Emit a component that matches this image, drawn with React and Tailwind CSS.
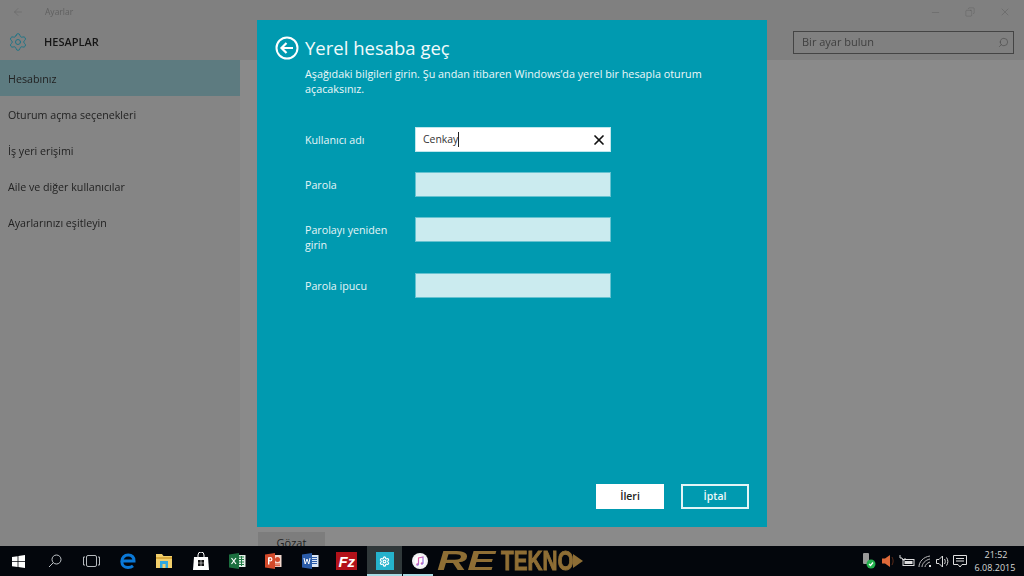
import React from "react";
import { Settings, ArrowLeft, Search, Minus, X, Copy } from "lucide-react";

const navItems = ["Hesabınız", "Oturum açma seçenekleri", "İş yeri erişimi", "Aile ve diğer kullanıcılar", "Ayarlarınızı eşitleyin"];

function Field({ label, value, h = "h-[45px]", labelClass = "" }) {
  return (
    <div className={`flex items-start ${h}`}>
      <div className={`w-[110px] pt-[6px] text-[10.7px] leading-[15px] text-[#e6f5f7] ${labelClass}`}>{label}</div>
      {value ? (
        <div className="flex h-[25px] w-[196px] items-center justify-between border border-[#bfe6ec] bg-white pl-[7px] pr-[3px] text-[10.4px] text-[#333]">
          <span className="flex items-center">{value}<span className="ml-0 inline-block h-[15px] w-px bg-[#222]" /></span>
          <X size={16} strokeWidth={2.6} className="text-[#111]" />
        </div>
      ) : (
        <div className="h-[25px] w-[196px] border border-[#66c2d0] bg-[#cbebef]" />
      )}
    </div>
  );
}

function Tb({ w = "w-[36.5px]", children, className = "" }) {
  return <div className={`flex h-full shrink-0 items-center justify-center ${w} ${className}`}>{children}</div>;
}

export default function App() {
  return (
    <div className="relative flex h-[576px] w-[1024px] flex-col overflow-hidden bg-[#8a8a8a] font-['Open_Sans','Noto_Sans',sans-serif]">
      {/* Settings window */}
      <div className="flex h-[60px] shrink-0 flex-col bg-[#808080]">
        <div className="flex h-[24px] items-center justify-between pl-[12px] pr-[13px] text-[#6a6a6a] blur-[0.4px]">
          <div className="flex items-center">
            <ArrowLeft size={12} strokeWidth={1.2} className="text-[#666]" />
            <span className="ml-[21px] text-[8.5px] text-[#5f5f5f]">Ayarlar</span>
          </div>
          <div className="flex items-center gap-[24px] text-[#5c5c5c]">
            <Minus size={11} strokeWidth={1} />
            <Copy size={10} strokeWidth={1} className="-scale-x-100" />
            <X size={12} strokeWidth={1} />
          </div>
        </div>
        <div className="flex h-[36px] items-center pl-[8px]">
          <Settings size={20} strokeWidth={1.2} className="text-[#1d7486] blur-[0.3px]" />
          <span className="ml-[16px] text-[11px] font-semibold text-[#151515] blur-[0.3px]">HESAPLAR</span>
          <div className="ml-auto mr-[10px] flex h-[23px] w-[221px] items-center justify-between border border-[#444] pl-[8px] pr-[4px] text-[11px] text-[#3f3f3f] blur-[0.3px]">
            <span>Bir ayar bulun</span>
            <Search size={11} strokeWidth={1.2} className="-scale-x-100 text-[#444]" />
          </div>
        </div>
      </div>
      <div className="flex min-h-0 flex-1">
        <div className="w-[240px] shrink-0 bg-[#858585] text-[10.7px] text-[#222]">
          {navItems.map((n, i) => (
            <div key={n} className={`flex h-[36px] items-center pl-[8px] pt-[2px] ${i === 0 ? "bg-[#5d7b80]" : ""}`}><span className="blur-[0.3px]">{n}</span></div>
          ))}
        </div>
        <div className="flex flex-1 flex-col justify-end pl-[18px]">
          <div className="flex h-[14px] w-[67px] items-start justify-center overflow-hidden bg-[#7d7d7d] pt-[4px] text-[11px] leading-[14px] text-[#222]">Gözat</div>
        </div>
      </div>

      {/* Taskbar */}
      <div className="flex h-[30px] shrink-0 items-center bg-[#03060c]">
        <Tb>
          <svg width="13" height="13" viewBox="0 0 13 13" fill="#fff"><path d="M0 2l5.6-.8v5H0zM6.4 1.100L13 0v6.200H6.400zM0 7h5.600v5L0 11.200zM6.400 7H13v6l-6.600-1z" /></svg>
        </Tb>
        <Tb>
          <svg width="14" height="14" viewBox="0 0 14 14" fill="none" stroke="#bfc4c8" strokeWidth="1"><circle cx="8.500" cy="5.500" r="4.500" /><path d="M5.300 8.700L1 13" /></svg>
        </Tb>
        <Tb>
          <svg width="17" height="12" viewBox="0 0 17 12" fill="none" stroke="#b5b9bd" strokeWidth="1"><rect x="3.500" y=".5" width="10" height="11" rx="1.500" /><path d="M2 2H.5v8H2M15 2h1.500v8H15" /></svg>
        </Tb>
        <Tb>
          <svg width="16" height="16" viewBox="0 0 16 16" fill="none" stroke="#0a78d7" strokeWidth="3"><path d="M2 8h12c0-4-2.500-6-5.800-6C4.500 2 1.800 4.800 1.800 8.500c0 3.600 2.700 6 6.200 6 2 0 3.700-.6 5-1.700" /></svg>
        </Tb>
        <Tb>
          <svg width="16" height="14" viewBox="0 0 16 14"><path d="M0 0h6l1.500 2H16v12H0z" fill="#f2cf6c" /><path d="M0 3h16v2H0z" fill="#d9a93e" /><rect x="4" y="7" width="8" height="7" fill="#2fa8e0" /><rect x="6.500" y="10" width="3" height="4" fill="#f2cf6c" /></svg>
        </Tb>
        <Tb>
          <svg width="16" height="18" viewBox="0 0 16 18"><path d="M5 5V3a3 3 0 016 0v2" fill="none" stroke="#fff" strokeWidth="1" /><path d="M1 5h14l1 13H0z" fill="#fff" /><path d="M5 8h2.700v2.700H5zM8.300 8H11v2.700H8.300zM5 11.300h2.700V14H5zM8.300 11.300H11V14H8.300z" fill="#111" /></svg>
        </Tb>
        <Tb>
          <svg width="17" height="16" viewBox="0 0 17 16"><path d="M6 2h10.500v12H6z" fill="#e4efe8" /><path d="M10 4h5M10 6.500h5M10 9h5M10 11.500h5M12.500 3v10" stroke="#1f7a45" strokeWidth="1" /><path d="M0 1.500L10 0v16L0 14.500z" fill="#1b6e3f" /><path d="M2.500 5L7 11M7 5l-4.500 6" stroke="#fff" strokeWidth="1.200" fill="none" /></svg>
        </Tb>
        <Tb>
          <svg width="17" height="16" viewBox="0 0 17 16"><path d="M6 2h10.500v12H6z" fill="#f4d9cf" /><circle cx="12.500" cy="6.500" r="2.500" fill="#d2492a" /><path d="M10 11h5M10 12.700h5" stroke="#d2492a" /><path d="M0 1.500L10 0v16L0 14.500z" fill="#d2492a" /><rect x="3" y="4.500" width="1.400" height="7" fill="#fff" /><circle cx="5.200" cy="6.300" r="1.700" fill="none" stroke="#fff" strokeWidth="1.200" /></svg>
        </Tb>
        <Tb>
          <svg width="17" height="16" viewBox="0 0 17 16"><path d="M6 2h10.500v12H6z" fill="#dbe6f5" /><path d="M10 4.500h5M10 6.500h5M10 8.500h5M10 10.500h5" stroke="#2b5ba8" /><path d="M0 1.500L10 0v16L0 14.500z" fill="#2b5ba8" /><path d="M2 5l1.200 6L5 6l1.800 5L8 5" stroke="#fff" strokeWidth="1" fill="none" /></svg>
        </Tb>
        <Tb>
          <div className="flex h-[18px] w-[21px] items-center justify-center bg-[#b3121a] font-['Liberation_Sans'] text-[15px] font-bold italic leading-none text-white">Fz</div>
        </Tb>
        <Tb w="w-[35px]" className="relative ml-[2px] bg-[#30383a]">
          <div className="flex h-[18px] w-[18px] items-center justify-center bg-[#25b2cc]">
            <Settings size={11} strokeWidth={2.6} className="text-white" />
          </div>
          <div className="absolute bottom-0 left-0 h-[2px] w-full bg-[#a8dbe4]" />
        </Tb>
        <Tb w="w-[36px]" className="relative">
          <svg width="16" height="16" viewBox="0 0 16 16"><defs><linearGradient id="it" x1="0" y1="0" x2="1" y2="1"><stop offset="0" stopColor="#f45b9c" /><stop offset="1" stopColor="#6d7bf0" /></linearGradient></defs><circle cx="8" cy="8" r="8" fill="#f3f3f5" /><circle cx="8" cy="8" r="5.500" fill="#fff" /><path d="M6.500 11.500V5L11 4v6.500" fill="none" stroke="url(#it)" strokeWidth="1.200" /><circle cx="5.500" cy="11.500" r="1.300" fill="url(#it)" /><circle cx="10" cy="10.500" r="1.300" fill="url(#it)" /></svg>
          <div className="absolute bottom-0 left-[1px] h-[2px] w-[30px] bg-[#a8dbe4]" />
        </Tb>
        <div className="-ml-[1px] flex h-full shrink-0 items-center font-['Liberation_Sans'] font-bold leading-none text-[#8e6e35]">
          <span className="inline-block w-[64px] origin-left scale-x-[1.5] text-[28px] italic">RE</span>
          <span className="inline-block w-[72px] origin-left scale-x-[0.74] text-[28px] [-webkit-text-stroke:1px_#8e6e35]">TEKNO</span>
          <svg className="-ml-[0px]" width="10" height="14" viewBox="0 0 10 14" fill="#8e6e35"><path d="M0 0l10 7-10 7z" /></svg>
        </div>
        <div className="ml-auto flex h-full items-center">
          <div className="flex w-[20px] justify-center"><svg width="16" height="16" viewBox="0 0 16 16"><rect x="2" y="0" width="6" height="11" rx="1" fill="#9a9a9a" /><circle cx="10" cy="11" r="4.500" fill="#22b14c" /><path d="M8 11l1.500 1.500L12 9.500" fill="none" stroke="#fff" strokeWidth="1.200" /></svg></div>
          <div className="flex w-[19px] justify-center"><svg width="16" height="14" viewBox="0 0 16 14"><path d="M1 4.500h3L9 1v12L4 9.500H1z" fill="#df6a3a" /><path d="M11 3c1.500 2.500 1.500 5.500 0 8" stroke="#5a2a18" fill="none" /></svg></div>
          <div className="flex w-[18px] justify-center"><svg width="16" height="12" viewBox="0 0 16 12"><path d="M1 0v3h2l1 2h2V3" stroke="#ddd" fill="none" /><rect x="4" y="4.500" width="11" height="6" fill="none" stroke="#ddd" /><rect x="5.500" y="6" width="8" height="3" fill="#ddd" /></svg></div>
          <div className="flex w-[18px] justify-center"><svg width="15" height="13" viewBox="0 0 15 13" fill="none" stroke="#bbb"><path d="M1 12C1 7 5 2 12 1M4 12c0-3 3-7 8-8M7 12c0-2 2-4 5-5" /><rect x="11" y="10" width="2" height="2" fill="#ddd" stroke="none" /></svg></div>
          <div className="flex w-[17px] justify-center"><svg width="14" height="13" viewBox="0 0 14 13" fill="none" stroke="#ddd"><path d="M.5 4.500h2.500L6.500 1v11L3 8.500H.5z" /><path d="M8.500 4c1 1.500 1 3.500 0 5M10.500 2.500c1.800 2.500 1.800 5.500 0 8" /></svg></div>
          <div className="flex w-[18px] justify-center"><svg width="14" height="13" viewBox="0 0 14 13" fill="none" stroke="#ddd"><path d="M.5.500h13v9H9L7 12 5 9.500H.5z" /><path d="M3 3.500h8M3 6h8" /></svg></div>
          <div className="ml-[0px] w-[55px] pb-[1px] pr-[3px] text-center text-[9px] leading-[13px] text-[#d8d8d8]">
            <div className="pl-[2px]">21:52</div>
            <div className="whitespace-nowrap">6.08.2015</div>
          </div>
        </div>
      </div>

      {/* Dialog */}
      <div className="absolute left-[257px] top-[20px] flex h-[507px] w-[510px] flex-col bg-[#009ab0] px-[18px] pt-[16px] pb-[18px] text-white">
        <div className="flex h-[24px] items-center">
          <svg width="24" height="24" viewBox="0 0 24 24" fill="none" stroke="#fff" strokeWidth="2"><circle cx="12" cy="12" r="10.500" /><path d="M18 12H7M11.500 7L6.500 12l5 5" strokeWidth="2.200" /></svg>
          <span className="ml-[6px] text-[18.5px] leading-[24px] text-[#f2fafb]">Yerel hesaba geç</span>
        </div>
        <div className="mt-[6px] w-[430px] pl-[30px] text-[10.8px] leading-[15px] text-[#eef8f9]">
          Aşağıdaki bilgileri girin. Şu andan itibaren Windows’da yerel bir hesapla oturum açacaksınız.
        </div>
        <div className="mt-[31px] pl-[30px]">
          <Field label="Kullanıcı adı" value="Cenkay" />
          <Field label="Parola" />
          <Field label="Parolayı yeniden girin" h="h-[56px]" labelClass="pr-[20px]" />
          <Field label="Parola ipucu" />
        </div>
        <div className="mt-auto flex justify-end gap-[17px]">
          <div className="flex h-[25px] w-[68px] items-center justify-center bg-white text-[10.5px] font-semibold text-[#222]">İleri</div>
          <div className="flex h-[25px] w-[68px] items-center justify-center border-2 border-[#e3f4f6] text-[10.5px] font-semibold text-[#eef8f9]">İptal</div>
        </div>
      </div>
    </div>
  );
}
